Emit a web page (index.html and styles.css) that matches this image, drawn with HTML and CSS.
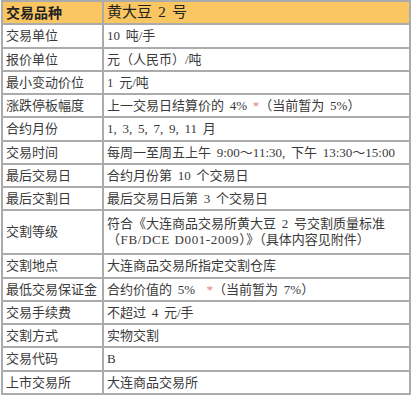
FILE: index.html
```
<!DOCTYPE html>
<html lang="zh-CN">
<head>
<meta charset="utf-8">
<title>黄大豆2号合约</title>
<link rel="stylesheet" href="styles.css">
</head>
<body>
<table class="spec">
  <tr class="head">
    <td class="label">交易品种</td>
    <td class="value">黄大豆 2 号</td>
  </tr>
  <tr><td class="label">交易单位</td><td class="value">10 吨/手</td></tr>
  <tr><td class="label">报价单位</td><td class="value">元（人民币）/吨</td></tr>
  <tr><td class="label">最小变动价位</td><td class="value">1 元/吨</td></tr>
  <tr><td class="label">涨跌停板幅度</td><td class="value">上一交易日结算价的 4% <span class="star">*</span>（当前暂为 5%）</td></tr>
  <tr><td class="label">合约月份</td><td class="value">1, 3, 5, 7, 9, 11 月</td></tr>
  <tr><td class="label">交易时间</td><td class="value">每周一至周五上午 9:00～11:30, 下午 13:30～15:00</td></tr>
  <tr><td class="label">最后交易日</td><td class="value">合约月份第 10 个交易日</td></tr>
  <tr><td class="label">最后交割日</td><td class="value">最后交易日后第 3 个交易日</td></tr>
  <tr class="tall"><td class="label">交割等级</td><td class="value">符合《大连商品交易所黄大豆 2 号交割质量标准<br><span class="mono">（FB/DCE D001-2009）</span>》（具体内容见附件）</td></tr>
  <tr><td class="label">交割地点</td><td class="value">大连商品交易所指定交割仓库</td></tr>
  <tr><td class="label">最低交易保证金</td><td class="value">合约价值的 5% &nbsp;<span class="star">*</span>（当前暂为 7%）</td></tr>
  <tr><td class="label">交易手续费</td><td class="value">不超过 4 元/手</td></tr>
  <tr><td class="label">交割方式</td><td class="value">实物交割</td></tr>
  <tr><td class="label">交易代码</td><td class="value">B</td></tr>
  <tr><td class="label">上市交易所</td><td class="value">大连商品交易所</td></tr>
</table>
</body>
</html>
```
FILE: styles.css
```
html, body {
  margin: 0;
  padding: 0;
  background: #ffffff;
}

body {
  font-family: "Liberation Serif", "Noto Sans CJK SC", serif;
  font-size: 13px;
  color: #3a3a3a;
}

.spec {
  border-collapse: collapse;
  width: 410px;
  margin-left: 1px;
  table-layout: fixed;
}

.spec td {
  border: 2px solid #ababab;
  padding: 3px 4px 3px 3px;
  line-height: 15.25px;
  vertical-align: middle;
  white-space: nowrap;
}

.spec .value {
  word-spacing: 2.5px;
}

.spec .label {
  width: 92px;
}

.spec .head td {
  background: #f9c661;
  color: #222;
}

.spec .head .label {
  font-weight: bold;
  font-size: 14px;
  font-family: "Noto Sans CJK SC", sans-serif;
}

.spec .head .value {
  font-size: 15px;
}

.spec .tall td {
  padding-top: 5px;
  padding-bottom: 5px;
  line-height: 16px;
}

.star {
  color: #e08080;
}

.mono {
  letter-spacing: 0.6px;
  word-spacing: 1px;
}
```
